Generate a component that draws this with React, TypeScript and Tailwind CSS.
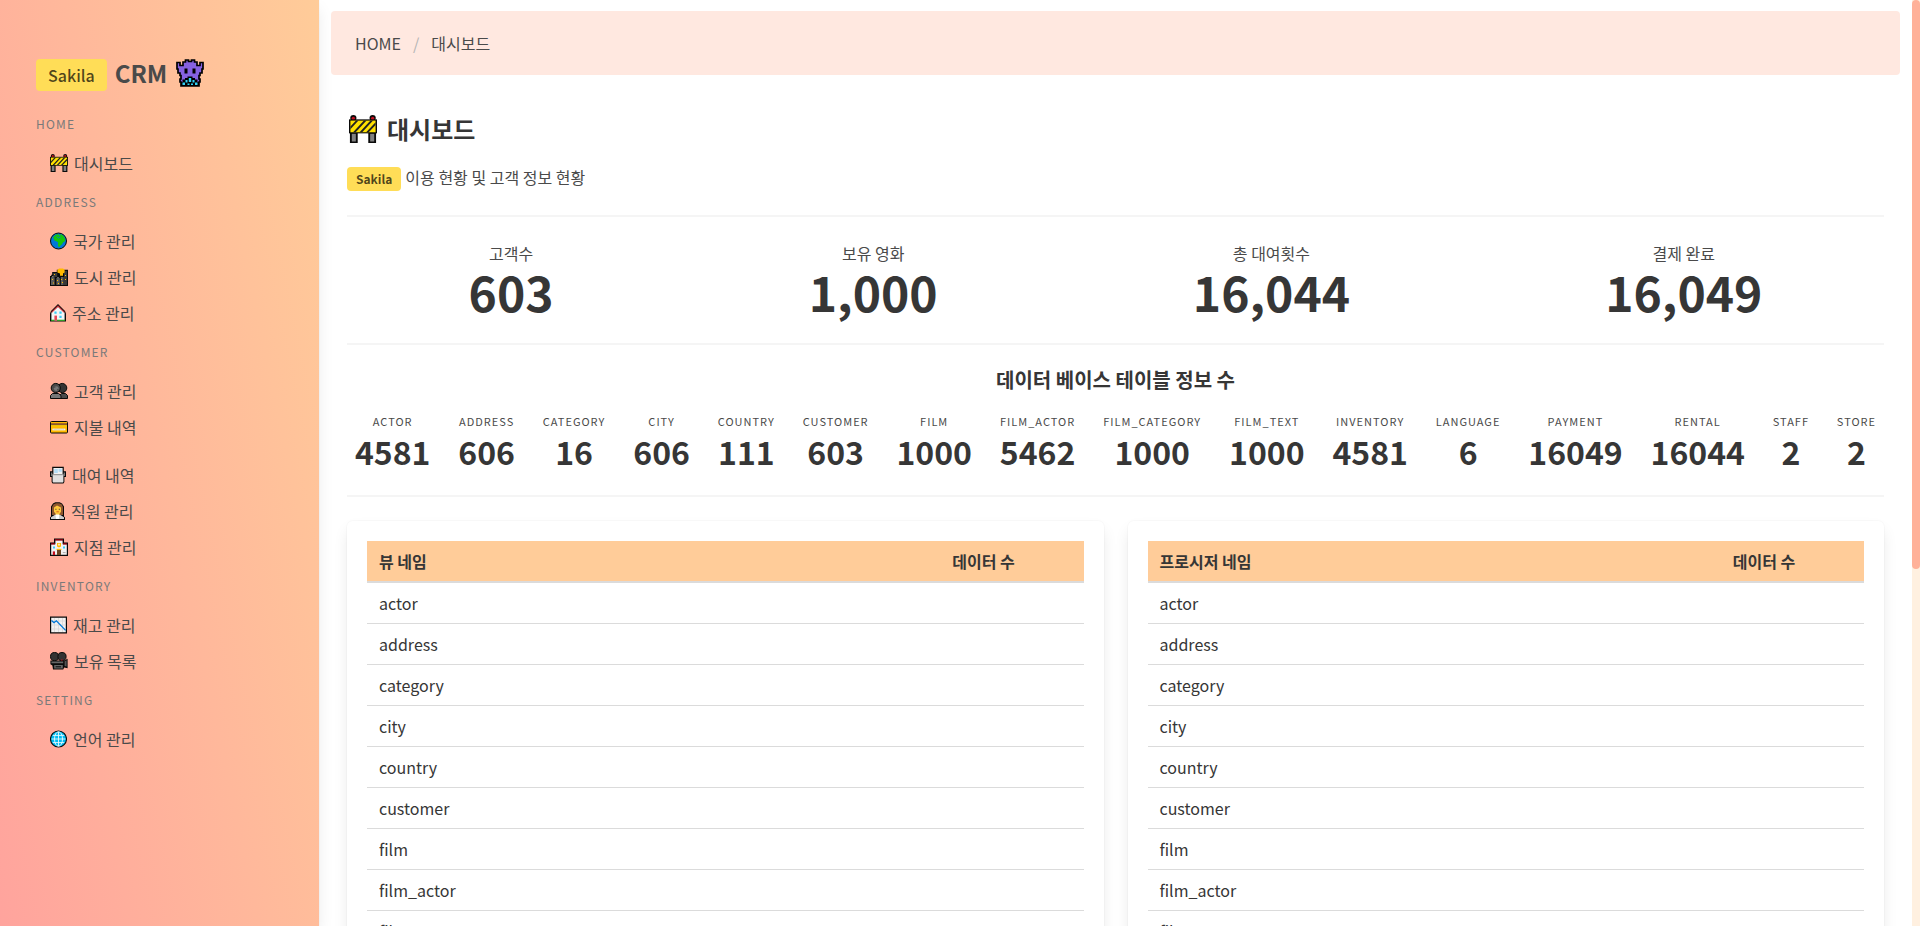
import React from "react";

type IconProps = { size?: number };

function Svg({ children, w = 18, size = 18 }: { children: React.ReactNode; w?: number; size?: number }) {
  return (
    <svg aria-hidden="true" width={(w * size) / 18} height={size} viewBox={`0 0 ${w} 18`} className="shrink-0">
      {children}
    </svg>
  );
}

function Barrier({ size }: IconProps) {
  return (
    <Svg size={size}>
      <path d="M.6 11h5v7h-5zM12.4 11h5v7h-5z" fill="#0a0a0a" />
      <path d="M1.8 12h2.6v5H1.800zM13.600 12h2.600v5h-2.600z" fill="#808080" />
      <circle cx="2.8" cy="2" r="2" fill="#0a0a0a" />
      <circle cx="15.2" cy="2" r="2" fill="#0a0a0a" />
      <circle cx="2.8" cy="2.200" r="1.100" fill="#c50f1f" />
      <circle cx="15.2" cy="2.200" r="1.100" fill="#c50f1f" />
      <path d="M0 2.8h18v9H0z" fill="#0a0a0a" />
      <path d="M.9 3.600h16.200v7.500H.9z" fill="#ffe100" />
      <path d="M.9 7.400 4.500 3.600h1.600L.9 9.200zM2.600 11.100l7-7.500h1.700l-7 7.500zM6.800 11.100l7-7.500h1.700l-7 7.500zM11 11.100l6.100-6.500v1.800l-4.400 4.700z" fill="#222" />
    </Svg>
  );
}

function Monster() {
  return (
    <svg aria-hidden="true" width="28" height="28" viewBox="0 0 28 28" className="shrink-0">
      <path
        d="M1 3.500h3v3h3V3h2.500V1h3v1.500h3V1h3v2H21v3.500h3v-3h3V10h-1v4h-2v2.500h-1V20h1v3h-1v4H5v-4H4v-3h1v-3.500H4V14H2v-4H1z"
        fill="#8661e0"
        stroke="#000"
        strokeWidth="1.700"
      />
      <path d="M8.500 9.500h3v5h-3zM16.500 9.500h3v5h-3z" fill="#000" />
      <path d="M5 23h1.500v-2.500H9V19h2.500v-1.500h5V19H19v1.500h2.500V23H23v4H5z" fill="#000" />
      <path d="M6.500 23.500H9V26H6.500zM9.500 21h2v2.500h-2zM12.800 19h2.400v4h-2.400zM16.500 21h2v2.500h-2zM19 23.500h2.500V26H19zM11.500 24.500h2V26h-2zM15 24.500h2V26h-2z" fill="#31d2f7" />
    </svg>
  );
}

function Earth() {
  return (
    <Svg w={17}>
      <circle cx="8.5" cy="9" r="8" fill="#0078d7" stroke="#0a0a0a" />
      <path d="M3 5.400 5.400 3l2-.8 2 .6 1.800-.6 2.400 1.800 1.600 3.200-.2 2-1.800 1-1.400 2.400-1.400.8-.8 1.600-1.400-.4-.4-2.400.4-1.800-1.800-1.200-2-.6L4 7z" fill="#16c60c" />
      <path d="M6.600 4.600 8.400 6l2-.8M9.400 3l.8 1.200" fill="none" stroke="#0078d7" strokeWidth=".8" />
    </Svg>
  );
}

function City() {
  return (
    <Svg>
      <path d="M0 8h1.200V6.800h1V4h4.600V1.800H18V18H0z" fill="#0a0a0a" />
      <path d="M3.200 5h4v4h-4zM14 3h3v14h-3z" fill="#383838" />
      <path d="M7.400 2 9 .4h4l1.600 1.200v3L13 5.400v2.400h-3V5.400L7.400 4.400z" fill="#ffb900" />
      <path d="M1 9.200h3.600V17H1zM6.400 10h3.400v7H6.400zM10.600 9h3v8h-3z" fill="#5c5c5c" />
      <path d="M2 8h1.600v1.200H2zM7.200 9h1.600v1H7.200z" fill="#777" />
      <path d="M4 6h1v1H4zM2 11h1v1H2zM7 12h1v1H7zM11 11h1v1h-1zM3 14.500h1v1H3zM8 15h1v1H8zM12 14h1v1h-1zM15 7h1v1h-1zM15 11h1v1h-1z" fill="#ffb900" />
      <path d="M5 9h.9v8H5zM10 9h.6v8H10z" fill="#0a0a0a" />
    </Svg>
  );
}

function House() {
  return (
    <Svg w={16}>
      <path d="M0 17.600V9.400L1 7l7-7 7 7 1 2.400v8.200z" fill="#0a0a0a" />
      <path d="M1.400 8.800 8 2.400l6.600 6.400v7.800H1.400z" fill="#f5f5f5" />
      <path d="m1.200 8 6.800-6.800L14.800 8l-.8.8L8 3 2 8.800z" fill="#c8343a" />
      <path d="M4.400 7.600h2.200v2.200H4.400zM9.400 7.600h2.200v2.200H9.400zM9.400 11.800h2.200V14H9.400z" fill="#3acbf5" />
      <path d="M4.400 11.600H7v5H4.400z" fill="#e74856" />
      <path d="M1 15.800h3.400v1H1zM7 15.800h8v1H7z" fill="#16a60c" />
    </Svg>
  );
}

function People() {
  return (
    <Svg>
      <circle cx="12.2" cy="6" r="4.600" fill="#333" stroke="#0a0a0a" />
      <circle cx="5.8" cy="6" r="4.600" fill="#4a4a4a" stroke="#0a0a0a" />
      <path d="M9.500 16.500v-3l2-2h4l2 2v3z" fill="#4a4a4a" stroke="#0a0a0a" />
      <path d="M.5 16.500v-3l2-2h6l2.500 2v3z" fill="#767676" stroke="#0a0a0a" />
      <circle cx="6.200" cy="6.600" r="2.400" fill="#767676" />
      <path d="M4 5.200h1.400M7 7.400h1" stroke="#4a4a4a" />
    </Svg>
  );
}

function Card() {
  return (
    <Svg>
      <rect x=".5" y="3.500" width="17" height="11.500" rx="1" fill="#ffb900" stroke="#0a0a0a" />
      <path d="M1 5.200h16v2.200H1z" fill="#8e562e" />
      <path d="M1 7.400h16v.8H1z" fill="#fce100" />
      <path d="M2.400 10.600h13v1.800h-13z" fill="#f2f2f2" />
      <path d="M3.400 12c1-1.400 1 .4 2-.6s1 .8 2-.2 1 .8 2 0 1 .4 2-.2 1.400.6 2.600 0" fill="none" stroke="#b5a98b" strokeWidth=".5" />
    </Svg>
  );
}

function Printer() {
  return (
    <Svg w={16}>
      <path d="M2.200.8h11.600v4.400H16V11h-1.600v5l-1 1.600H2.600L1.600 16v-5H0V5.200h2.200z" fill="#0a0a0a" />
      <path d="M3.400 2h9.200v6H3.400z" fill="#f2f2f2" />
      <path d="M4.200 3h3.600v4H4.200zM8.600 2.800h3.200v3H8.600z" fill="#b3ddf5" />
      <path d="M1 6.400h1.400V10H1zM13.600 6.400H15V10h-1.400z" fill="#777" />
      <path d="M2.600 8.400h10.800v7.400l-.6.800H3.200l-.6-.8z" fill="#e0e0e0" />
      <path d="M2.600 8.800h10.800" stroke="#aaa" />
    </Svg>
  );
}

function Woman() {
  return (
    <Svg w={15}>
      <path d="M1 4.600 3 1.400 5.400.2h4.200L12 1.400l2 3.200v9.800l1 1V18H0v-2.600l1-1z" fill="#0a0a0a" />
      <path d="M2 5l1.600-2.800L6 1.200h3.400l2.200 1L13 5v8H2z" fill="#8e562e" />
      <path d="M4 5.400 7 3.600l4 2v4.200L9.400 12v1.600H5.800V12L4 9.800z" fill="#ffc83d" />
      <path d="M5.400 6.800h1v1h-1zM8.800 6.800h1v1h-1z" fill="#333" />
      <path d="M6.400 9.800h2.400" stroke="#d83b01" strokeWidth=".8" />
      <path d="M1 15.200 4.600 13h5.800l3.600 2.200V17H1z" fill="#d0d0d0" />
      <path d="M5.400 12.600h4L8.800 17H6z" fill="#fff" />
    </Svg>
  );
}

function Store() {
  return (
    <Svg>
      <path d="M0 4.400h4V.4h10v4h4V18H0z" fill="#0a0a0a" />
      <path d="M1.200 6.200h4.200v-4h7.200v4h4.200v10.600H1.200z" fill="#f2f2f2" />
      <path d="M5 1.200h8v1.200H5zM1 5.200h4v1.200H1zM13 5.200h4v1.200h-4z" fill="#a4000f" />
      <path d="M7 5h4v3.400L9 9.600 7 8.400z" fill="#ffb900" />
      <path d="M8.200 5.800h1.600v1.600H8.200z" fill="#f2f2f2" />
      <path d="M3 8.400h2v2.200H3zM13 8.400h2v2.200h-2z" fill="#3acbf5" />
      <path d="M6.600 10.800h4.800V12H6.600z" fill="#ffb900" />
      <path d="M7 12h4v5H7z" fill="#6b4423" />
      <path d="M2.800 13.400H5V17H2.800z" fill="#c50f1f" />
      <path d="M12.800 14.600h2.800" stroke="#aaa" />
    </Svg>
  );
}

function ChartDown() {
  return (
    <Svg w={17}>
      <path d="M.6 1.100h15.800v15.800H.6z" fill="#f2f2f2" stroke="#0a0a0a" strokeWidth="1.200" />
      <path d="M4.500 2v14M8.500 2v14M12.500 2v14M1.500 5h14M1.500 9h14M1.500 13h14" stroke="#d4d4d4" strokeWidth=".7" />
      <path d="m1.400 4.400 2.600 2.200 2.400-1.800 9.200 9.600" fill="none" stroke="#0078d7" strokeWidth="1.300" />
    </Svg>
  );
}

function Camera() {
  return (
    <Svg>
      <circle cx="4.600" cy="4.600" r="4.100" fill="#333" stroke="#0a0a0a" />
      <circle cx="12" cy="4.600" r="4.100" fill="#333" stroke="#0a0a0a" />
      <path d="M.4 8.600h13.800l3.400-1.800v9.400l-3.400-.8-1 2.200H3l-.6-4.200-2-1.200z" fill="#0a0a0a" />
      <path d="M1.400 9.600h11.800v1.600H1.400zM4.200 13h8.600v3.600H4.200z" fill="#666" />
      <path d="M14.600 9.200l2-1v6.400l-2-.6z" fill="#555" />
      <path d="M5.600 14.800H11" stroke="#0a0a0a" />
      <path d="M11 7.600h1.600v1H11z" fill="#c50f1f" />
    </Svg>
  );
}

function Globe() {
  return (
    <Svg w={17}>
      <circle cx="8.500" cy="9" r="8" fill="#00bcf2" stroke="#0a0a0a" strokeWidth="1.100" />
      <path d="M8.500 1.800v14.400M1.600 9h13.800M2.800 5.400h11.400M2.800 12.600h11.400" stroke="#e8f8fd" strokeWidth=".9" />
      <ellipse cx="8.500" cy="9" rx="4" ry="7.200" fill="none" stroke="#e8f8fd" strokeWidth=".9" />
    </Svg>
  );
}

type Item = { label: string; icon: () => React.ReactElement };
type Group = { title: string; lists: Item[][] };

const groups: Group[] = [
  { title: "Home", lists: [[{ label: "대시보드", icon: () => <Barrier /> }]] },
  {
    title: "Address",
    lists: [[
      { label: "국가 관리", icon: Earth },
      { label: "도시 관리", icon: City },
      { label: "주소 관리", icon: House },
    ]],
  },
  {
    title: "Customer",
    lists: [
      [
        { label: "고객 관리", icon: People },
        { label: "지불 내역", icon: Card },
      ],
      [
        { label: "대여 내역", icon: Printer },
        { label: "직원 관리", icon: Woman },
        { label: "지점 관리", icon: Store },
      ],
    ],
  },
  {
    title: "Inventory",
    lists: [[
      { label: "재고 관리", icon: ChartDown },
      { label: "보유 목록", icon: Camera },
    ]],
  },
  { title: "Setting", lists: [[{ label: "언어 관리", icon: Globe }]] },
];

const totals = [
  ["고객수", "603"],
  ["보유 영화", "1,000"],
  ["총 대여횟수", "16,044"],
  ["결제 완료", "16,049"],
];

const tableCounts = [
  ["actor", "4581"],
  ["address", "606"],
  ["category", "16"],
  ["city", "606"],
  ["country", "111"],
  ["customer", "603"],
  ["film", "1000"],
  ["film_actor", "5462"],
  ["film_category", "1000"],
  ["film_text", "1000"],
  ["inventory", "4581"],
  ["language", "6"],
  ["payment", "16049"],
  ["rental", "16044"],
  ["staff", "2"],
  ["store", "2"],
];

const cardShadow = "shadow-[0_8px_16px_-2px_rgba(10,10,10,0.1),0_0_0_1px_rgba(10,10,10,0.02)]";

function Sidebar() {
  return (
    <aside
      className={`w-[319px] shrink-0 bg-[linear-gradient(to_top_right,#ff9a9e,#ffcc99)] bg-[length:100%_163%] bg-no-repeat px-9 pt-[59px] ${cardShadow}`}
    >
      <h1 className="flex h-8 items-start text-2xl leading-7 font-semibold text-[#4a4a4a]">
        <span className="flex h-8 items-center rounded bg-[#ffdd57] px-3 text-base font-medium text-black/70">Sakila</span>
        <span className="ml-2">CRM</span>
        <span className="ml-[9px]">
          <Monster />
        </span>
      </h1>
      <nav className="mt-6">
        {groups.map((group) => (
          <section key={group.title}>
            <h2 className="my-3 text-xs leading-[18px] tracking-widest text-[#7a7a7a] uppercase">{group.title}</h2>
            <div className="flex flex-col gap-3">
              {group.lists.map((list, i) => (
                <ul key={i}>
                  {list.map((item) => (
                    <li key={item.label}>
                      <a href="#" className="flex items-center gap-1.5 px-[14px] py-2 text-base leading-5 text-[#4a4a4a]">
                        <item.icon />
                        {item.label}
                      </a>
                    </li>
                  ))}
                </ul>
              ))}
            </div>
          </section>
        ))}
      </nav>
    </aside>
  );
}

const rows = tableCounts.map(([name]) => name);

function NameTable({ heading }: { heading: string }) {
  return (
    <div className={`flex-1 rounded-md bg-white p-5 ${cardShadow}`}>
      <table className="w-full table-fixed border-collapse text-left text-base text-[#363636]">
        <thead>
          <tr className="border-b-2 border-[#dbdbdb] bg-[#ffcc99]">
            <th className="w-4/5 px-3 py-2 font-bold">{heading}</th>
            <th className="w-1/5 px-3 py-2 font-bold">데이터 수</th>
          </tr>
        </thead>
        <tbody>
          {rows.map((row) => (
            <tr key={row} className="border-b border-[#dbdbdb]">
              <td className="px-3 py-2">{row}</td>
              <td className="px-3 py-2" />
            </tr>
          ))}
        </tbody>
      </table>
    </div>
  );
}

function Rule() {
  return <hr className="my-6 h-[2px] border-0 bg-[#f5f5f5]" />;
}

export default function App() {
  return (
    <div className="flex h-screen bg-white font-['Noto_Sans_CJK_KR','Noto_Sans',sans-serif] text-base text-[#4a4a4a]">
      <Sidebar />
      <main className="min-w-0 flex-1 overflow-x-hidden overflow-y-auto px-3 pt-[11px] pb-6 [scrollbar-width:none]">
        <nav aria-label="breadcrumb" className="flex h-16 items-center rounded bg-[#ffe8e0] px-6">
          <a href="#">HOME</a>
          <span className="px-3 text-[#b5b5b5]">/</span>
          <a href="#">대시보드</a>
        </nav>
        <div className="px-4 pt-10">
          <h1 className="flex items-center gap-2.5 pl-[2px] text-2xl leading-[26px] font-bold text-[#363636]">
            <Barrier size={28} />
            대시보드
          </h1>
          <p className="mt-6 flex items-start gap-1 leading-5">
            <span className="flex h-6 items-center rounded bg-[#ffdd57] px-[9px] text-xs font-bold text-black/70">Sakila</span>
            이용 현황 및 고객 정보 현황
          </p>
          <Rule />
          <div className="flex gap-3 text-center">
            {totals.map(([label, value]) => (
              <div key={label} className="flex-auto">
                <p className="leading-6">{label}</p>
                <p className="pb-[2px] text-5xl leading-[52px] font-bold text-[#363636]">{value}</p>
              </div>
            ))}
          </div>
          <Rule />
          <h2 className="text-center text-xl leading-[22px] font-bold text-[#363636]">데이터 베이스 테이블 정보 수</h2>
          <div className="mt-[22px] flex gap-3 text-center">
            {tableCounts.map(([label, value]) => (
              <div key={label} className="flex-auto">
                <p className="mb-1 text-[11px] leading-4 tracking-[1px] uppercase">{label}</p>
                <p className="pb-[2px] text-[32px] leading-9 font-bold text-[#363636]">{value}</p>
              </div>
            ))}
          </div>
          <Rule />
          <div className="flex gap-6">
            <NameTable heading="뷰 네임" />
            <NameTable heading="프로시저 네임" />
          </div>
        </div>
      </main>
      <div className="w-2 shrink-0 bg-[#fff0e0]">
        <div className="h-[61.4%] rounded bg-[#ffb199]" />
      </div>
    </div>
  );
}
